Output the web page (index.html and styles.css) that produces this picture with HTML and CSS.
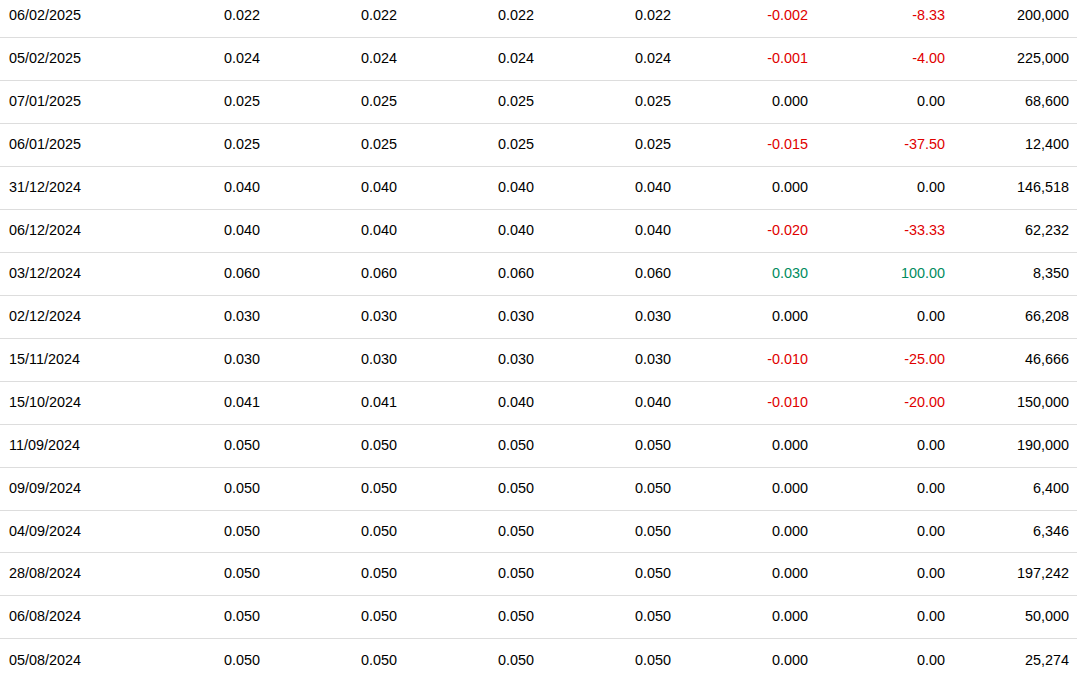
FILE: index.html
```html
<!DOCTYPE html>
<html>
<head>
<meta charset="utf-8">
<link rel="stylesheet" href="styles.css">
</head>
<body>
<table class="history">
<colgroup>
<col class="c-date"><col class="c-num"><col class="c-num"><col class="c-num"><col class="c-num"><col class="c-num"><col class="c-num"><col class="c-vol">
</colgroup>
<tbody>
<tr><td>06/02/2025</td><td>0.022</td><td>0.022</td><td>0.022</td><td>0.022</td><td class="down">-0.002</td><td class="down">-8.33</td><td>200,000</td></tr>
<tr><td>05/02/2025</td><td>0.024</td><td>0.024</td><td>0.024</td><td>0.024</td><td class="down">-0.001</td><td class="down">-4.00</td><td>225,000</td></tr>
<tr><td>07/01/2025</td><td>0.025</td><td>0.025</td><td>0.025</td><td>0.025</td><td>0.000</td><td>0.00</td><td>68,600</td></tr>
<tr><td>06/01/2025</td><td>0.025</td><td>0.025</td><td>0.025</td><td>0.025</td><td class="down">-0.015</td><td class="down">-37.50</td><td>12,400</td></tr>
<tr><td>31/12/2024</td><td>0.040</td><td>0.040</td><td>0.040</td><td>0.040</td><td>0.000</td><td>0.00</td><td>146,518</td></tr>
<tr><td>06/12/2024</td><td>0.040</td><td>0.040</td><td>0.040</td><td>0.040</td><td class="down">-0.020</td><td class="down">-33.33</td><td>62,232</td></tr>
<tr><td>03/12/2024</td><td>0.060</td><td>0.060</td><td>0.060</td><td>0.060</td><td class="up">0.030</td><td class="up">100.00</td><td>8,350</td></tr>
<tr><td>02/12/2024</td><td>0.030</td><td>0.030</td><td>0.030</td><td>0.030</td><td>0.000</td><td>0.00</td><td>66,208</td></tr>
<tr><td>15/11/2024</td><td>0.030</td><td>0.030</td><td>0.030</td><td>0.030</td><td class="down">-0.010</td><td class="down">-25.00</td><td>46,666</td></tr>
<tr><td>15/10/2024</td><td>0.041</td><td>0.041</td><td>0.040</td><td>0.040</td><td class="down">-0.010</td><td class="down">-20.00</td><td>150,000</td></tr>
<tr><td>11/09/2024</td><td>0.050</td><td>0.050</td><td>0.050</td><td>0.050</td><td>0.000</td><td>0.00</td><td>190,000</td></tr>
<tr><td>09/09/2024</td><td>0.050</td><td>0.050</td><td>0.050</td><td>0.050</td><td>0.000</td><td>0.00</td><td>6,400</td></tr>
<tr><td>04/09/2024</td><td>0.050</td><td>0.050</td><td>0.050</td><td>0.050</td><td>0.000</td><td>0.00</td><td>6,346</td></tr>
<tr><td>28/08/2024</td><td>0.050</td><td>0.050</td><td>0.050</td><td>0.050</td><td>0.000</td><td>0.00</td><td>197,242</td></tr>
<tr><td>06/08/2024</td><td>0.050</td><td>0.050</td><td>0.050</td><td>0.050</td><td>0.000</td><td>0.00</td><td>50,000</td></tr>
<tr><td>05/08/2024</td><td>0.050</td><td>0.050</td><td>0.050</td><td>0.050</td><td>0.000</td><td>0.00</td><td>25,274</td></tr>
</tbody>
</table>
</body>
</html>
```

FILE: styles.css
```css
html, body {
  margin: 0;
  padding: 0;
  background: #fff;
}
body {
  font-family: "Liberation Sans", Arial, sans-serif;
  font-size: 14.4px;
  color: #000;
  overflow: hidden;
}
.history {
  width: 1077px;
  border-collapse: collapse;
  table-layout: fixed;
  margin-top: -5px;
}
.c-date { width: 131px; }
.c-num { width: 137px; }
.c-vol { width: 124px; }
.history td {
  height: 42.93px;
  padding: 0 8px 2px;
  text-align: right;
  vertical-align: middle;
  border-bottom: 1px solid #dddddd;
  box-sizing: border-box;
  white-space: nowrap;
}
.history td:first-child {
  text-align: left;
  padding-left: 9px;
}
.history tr:last-child td {
  border-bottom: none;
}
.down { color: #e00000; }
.up { color: #008c5e; }
```
